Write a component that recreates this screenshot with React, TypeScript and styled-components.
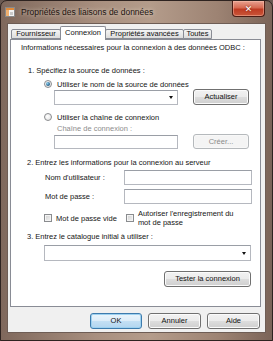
import React from "react";
import styled, { createGlobalStyle } from "styled-components";

const Global = createGlobalStyle`
  html, body { margin: 0; padding: 0; background: #6b5a52; }
  * { box-sizing: border-box; }
`;

const FONT = `"Liberation Sans", Arial, sans-serif`;

const Window = styled.div`
  width: 273px;
  height: 341px;
  border: 1px solid #2e2320;
  border-radius: 7px 7px 0 0;
  background: linear-gradient(90deg, #7f685c 0%, #a88f7f 35%, #b49c8b 55%, #9d8373 80%, #7b6458 100%);
  display: flex;
  flex-direction: column;
  font-family: ${FONT};
  overflow: hidden;
`;

const TitleBar = styled.div`
  height: 23px;
  display: flex;
  align-items: flex-start;
  padding-left: 4px;
`;

const AppIcon = styled.svg`
  width: 10px;
  height: 10px;
  margin-top: 6px;
  flex: none;
`;

const Title = styled.div`
  margin-left: 6px;
  margin-top: 6px;
  font-size: 8.5px;
  line-height: 10px;
  color: #1c1410;
  text-shadow: 0 0 4px rgba(255, 240, 225, 0.8);
  white-space: nowrap;
`;

const CloseButton = styled.div`
  margin-left: auto;
  margin-right: 7px;
  width: 33px;
  height: 16px;
  border: 1px solid #4a1c14;
  border-top: none;
  border-radius: 0 0 4px 4px;
  background: linear-gradient(180deg, #e7a190 0%, #d66a52 45%, #bf3b22 55%, #c9563a 100%);
  box-shadow: inset 0 0 0 1px rgba(255, 200, 180, 0.45);
  display: flex;
  align-items: center;
  justify-content: center;
  color: #fff;
  font-weight: bold;
  font-size: 9px;
  font-family: "DejaVu Sans", sans-serif;
  text-shadow: 0 0 2px #5a1a10;
`;

const Client = styled.div`
  flex: 1;
  margin: 0 7px 8px 7px;
  background: #f0f0f0;
  box-shadow: 0 0 0 1px #6e5d55;
  display: flex;
  flex-direction: column;
  padding: 2px 4px 3px 2px;
`;

const TabRow = styled.div`
  height: 13px;
  display: flex;
  align-items: flex-end;
  padding-left: 1px;
  position: relative;
  z-index: 1;
`;

const Tab = styled.div<{ $w: number; $active?: boolean }>`
  width: ${(p) => p.$w}px;
  height: ${(p) => (p.$active ? 14 : 10)}px;
  margin-bottom: ${(p) => (p.$active ? -1 : 0)}px;
  & + & { margin-left: -1px; }
  border: 1px solid #898c95;
  border-bottom: ${(p) => (p.$active ? "none" : "1px solid #898c95")};
  border-radius: 2px 2px 0 0;
  background: ${(p) =>
    p.$active ? "#ffffff" : "linear-gradient(180deg, #f4f4f4 0%, #e9e9e9 50%, #dcdcdc 100%)"};
  font-size: 7.5px;
  line-height: ${(p) => (p.$active ? 11 : 8)}px;
  text-align: center;
  color: #111;
  white-space: nowrap;
  position: relative;
  z-index: ${(p) => (p.$active ? 2 : 1)};
`;

const Panel = styled.div`
  height: 268px;
  background: #fff;
  border: 1px solid #898c95;
  padding: 2px 0 0 0;
  display: flex;
  flex-direction: column;
`;

const Text = styled.div<{ $indent: number; $top: number; $muted?: boolean }>`
  margin-left: ${(p) => p.$indent}px;
  margin-top: ${(p) => p.$top}px;
  font-size: 7.5px;
  line-height: 10px;
  height: 10px;
  color: ${(p) => (p.$muted ? "#8d8d8d" : "#151515")};
  white-space: nowrap;
`;

const Row = styled.div<{ $indent: number; $top: number; $h: number }>`
  margin-left: ${(p) => p.$indent}px;
  margin-top: ${(p) => p.$top}px;
  height: ${(p) => p.$h}px;
  display: flex;
  align-items: center;
`;

const RadioCircle = styled.span<{ $checked?: boolean }>`
  width: 8px;
  height: 8px;
  border-radius: 50%;
  border: 1px solid #8a8c8f;
  background: radial-gradient(circle at 40% 40%, #ffffff 0%, #dedede 100%);
  display: flex;
  align-items: center;
  justify-content: center;
  flex: none;
  &::after {
    content: "";
    display: ${(p) => (p.$checked ? "block" : "none")};
    width: 4px;
    height: 4px;
    border-radius: 50%;
    background: radial-gradient(circle at 35% 35%, #8fd0f0 0%, #1f5c86 70%);
  }
`;

const CheckBox = styled.span`
  width: 8px;
  height: 8px;
  border: 1px solid #8a8c8f;
  background: linear-gradient(135deg, #cfcfcf 0%, #e6e6e6 60%, #f2f2f2 100%);
  box-shadow: inset 0 0 0 1px #f4f4f4;
  flex: none;
`;

const Label = styled.span<{ $gap: number; $w?: number; $muted?: boolean }>`
  margin-left: ${(p) => p.$gap}px;
  font-size: 7.5px;
  line-height: 9px;
  color: ${(p) => (p.$muted ? "#8d8d8d" : "#151515")};
  white-space: ${(p) => (p.$w ? "normal" : "nowrap")};
  width: ${(p) => (p.$w ? `${p.$w}px` : "auto")};
`;

const FieldLabel = styled.span`
  width: 79px;
  font-size: 7.5px;
  line-height: 10px;
  color: #151515;
  white-space: nowrap;
  flex: none;
`;

const Input = styled.div<{ $w: number; $h: number }>`
  width: ${(p) => p.$w}px;
  height: ${(p) => p.$h}px;
  border: 1px solid #b5b8bf;
  border-top-color: #9a9ea6;
  background: #fff;
  flex: none;
  display: flex;
  align-items: center;
  justify-content: flex-end;
  padding-right: 4px;
`;

const Arrow = styled.span`
  width: 0;
  height: 0;
  border-left: 2.5px solid transparent;
  border-right: 2.5px solid transparent;
  border-top: 3px solid #111;
`;

const Button = styled.div<{ $w: number; $h?: number; $disabled?: boolean; $default?: boolean }>`
  width: ${(p) => p.$w}px;
  height: ${(p) => p.$h ?? 16}px;
  flex: none;
  border: 1px solid ${(p) => (p.$disabled ? "#b5b9bc" : p.$default ? "#3d7bad" : "#707070")};
  border-radius: 3px;
  background: ${(p) =>
    p.$disabled
      ? "#f4f4f4"
      : p.$default
      ? "linear-gradient(180deg, #eaf5fc 0%, #dcecf8 50%, #c4e0f4 51%, #b2d5ef 100%)"
      : "linear-gradient(180deg, #f2f2f2 0%, #ebebeb 50%, #dddddd 51%, #cfcfcf 100%)"};
  box-shadow: inset 0 0 0 1px ${(p) => (p.$disabled ? "#f8f8f8" : p.$default ? "#9ed1f0" : "#fbfbfb")};
  color: ${(p) => (p.$disabled ? "#8a8a8a" : "#111")};
  font-size: 7.5px;
  line-height: 10px;
  display: flex;
  align-items: center;
  justify-content: center;
  white-space: nowrap;
`;

const Spacer = styled.div<{ $w: number }>`
  width: ${(p) => p.$w}px;
  flex: none;
`;

const ButtonBar = styled.div`
  margin-top: 6px;
  margin-right: 1px;
  display: flex;
  justify-content: flex-end;
  gap: 6px;
`;

export default function App() {
  return (
    <>
      <Global />
      <Window>
        <TitleBar>
          <AppIcon viewBox="0 0 10 10">
            <rect x="0.5" y="0.5" width="9" height="9" fill="#f4f4f4" stroke="#8a8a8a" strokeWidth="1" />
            <rect x="1" y="1" width="8" height="2" fill="#e08a3a" />
            <rect x="1" y="3" width="3" height="6" fill="#f0b070" />
            <rect x="5" y="5" width="3" height="3" fill="#c9c9c9" />
          </AppIcon>
          <Title>Propriétés des liaisons de données</Title>
          <CloseButton>✕</CloseButton>
        </TitleBar>
        <Client>
          <TabRow>
            <Tab $w={50}>Fournisseur</Tab>
            <Tab $w={46} $active>Connexion</Tab>
            <Tab $w={79}>Propriétés avancées</Tab>
            <Tab $w={29}>Toutes</Tab>
          </TabRow>
          <Panel>
            <Text $indent={10} $top={1}>
              Informations nécessaires pour la connexion à des données ODBC :
            </Text>
            <Text $indent={17} $top={13}>1. Spécifiez la source de données :</Text>
            <Row $indent={33} $top={3} $h={10}>
              <RadioCircle $checked />
              <Label $gap={5}>Utiliser le nom de la source de données</Label>
            </Row>
            <Row $indent={43} $top={0} $h={16}>
              <Input $w={124} $h={15}>
                <Arrow />
              </Input>
              <Spacer $w={15} />
              <Button $w={56}>Actualiser</Button>
            </Row>
            <Row $indent={33} $top={7} $h={10}>
              <RadioCircle />
              <Label $gap={5}>Utiliser la chaîne de connexion</Label>
            </Row>
            <Text $indent={46} $top={2} $muted>Chaîne de connexion :</Text>
            <Row $indent={43} $top={0} $h={15}>
              <Input $w={124} $h={14} />
              <Spacer $w={15} />
              <Button $w={56} $h={15} $disabled>Créer...</Button>
            </Row>
            <Text $indent={16} $top={9}>2. Entrez les informations pour la connexion au serveur</Text>
            <Row $indent={34} $top={2} $h={15}>
              <FieldLabel>Nom d'utilisateur :</FieldLabel>
              <Input $w={128} $h={15} />
            </Row>
            <Row $indent={34} $top={4} $h={15}>
              <FieldLabel>Mot de passe :</FieldLabel>
              <Input $w={128} $h={15} />
            </Row>
            <Row $indent={33} $top={5} $h={18}>
              <CheckBox />
              <Label $gap={4}>Mot de passe vide</Label>
              <Spacer $w={9} />
              <CheckBox />
              <Label $gap={4} $w={98}>Autoriser l'enregistrement du mot de passe</Label>
            </Row>
            <Text $indent={16} $top={5}>3. Entrez le catalogue initial à utiliser :</Text>
            <Row $indent={33} $top={3} $h={16}>
              <Input $w={207} $h={16}>
                <Arrow />
              </Input>
            </Row>
            <Row $indent={153} $top={10} $h={16}>
              <Button $w={87}>Tester la connexion</Button>
            </Row>
          </Panel>
          <ButtonBar>
            <Button $w={52} $default>OK</Button>
            <Button $w={53}>Annuler</Button>
            <Button $w={53}>Aide</Button>
          </ButtonBar>
        </Client>
      </Window>
    </>
  );
}
